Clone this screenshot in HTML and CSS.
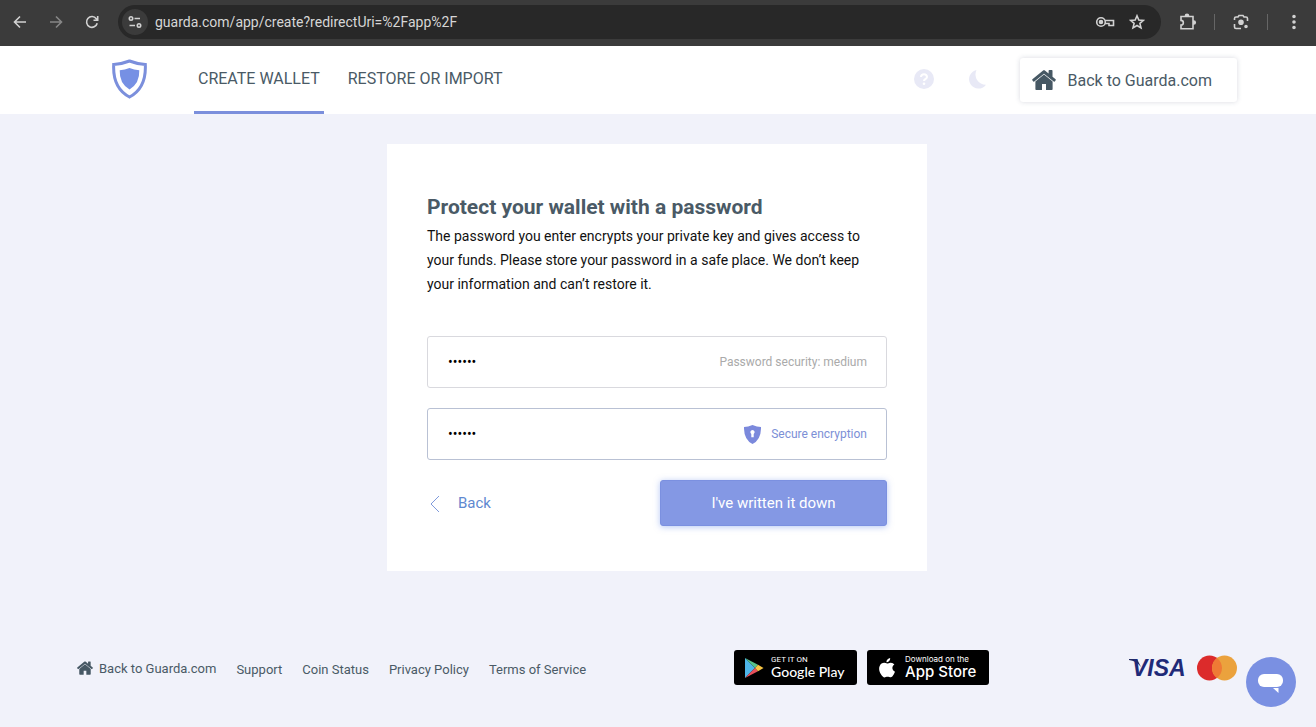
FILE: index.html
```
<!DOCTYPE html>
<html lang="en">
<head>
    <meta charset="UTF-8">
    <meta name="viewport" content="width=device-width, initial-scale=1.0">
    <title>Guarda Wallet</title>
    <link rel="stylesheet" href="styles.css">
</head>
<body>
    <svg width="0" height="0" class="sprite" aria-hidden="true">
        <symbol id="home" viewBox="0 0 24 20">
            <path d="M12 4.400 3.400 11.500V19c0 .6.4 1 1 1H10v-6h4v6h5.600c.6 0 1-.4 1-1v-7.500z"/>
            <path d="M23.600 9.300 20.500 6.700V.8c0-.4-.3-.7-.7-.7h-2.500c-.4 0-.7.3-.7.7v2.700L13.200.700c-.7-.6-1.700-.6-2.400 0L.4 9.300c-.3.300-.3.700-.1 1l1 1.200c.2.300.7.300 1 .1L12 3.700l9.700 7.900c.3.200.8.200 1-.1l1-1.200c.2-.3.200-.7-.1-1z"/>
        </symbol>
    </svg>

    <div class="browser-bar">
        <button class="bar-btn" aria-label="Back">
            <svg width="16" height="16" viewBox="0 0 16 16"><path d="M14 8H3M8 2.500 2.500 8 8 13.500"/></svg>
        </button>
        <button class="bar-btn dim" aria-label="Forward">
            <svg width="16" height="16" viewBox="0 0 16 16"><path d="M2 8h11M8 2.500 13.500 8 8 13.500"/></svg>
        </button>
        <button class="bar-btn" aria-label="Reload">
            <svg width="16" height="16" viewBox="0 0 16 16"><path d="M13.200 9.200A5.400 5.400 0 1 1 12.300 4.700L13.500 6M13.700 2v4.200H9.500"/></svg>
        </button>
        <div class="address">
            <button class="site-info" aria-label="Site information">
                <svg width="14" height="14" viewBox="0 0 14 14"><circle cx="3" cy="3.500" r="1.700"/><path d="M6.500 3.500H12M1.500 10.500H7"/><circle cx="11" cy="10.500" r="1.700"/></svg>
            </button>
            <input class="url" type="text" aria-label="Address" value="guarda.com/app/create?redirectUri=%2Fapp%2F">
            <button class="bar-btn" aria-label="Passwords">
                <svg width="20" height="16" viewBox="0 0 20 16"><circle cx="6" cy="8" r="4.300"/><circle cx="6" cy="8" r="1.500" class="solid"/><path d="M10 6.500h8.500v5H14v-2h-4"/></svg>
            </button>
            <button class="bar-btn" aria-label="Bookmark">
                <svg width="16" height="16" viewBox="0 0 16 16"><path d="m8 1.800 1.800 4.200 4.600.4-3.500 3 1.100 4.500L8 11.500l-4 2.400 1.100-4.500-3.500-3 4.600-.4z"/></svg>
            </button>
        </div>
        <div class="bar-tools">
            <button class="bar-btn" aria-label="Extensions">
                <svg width="18" height="18" viewBox="0 0 18 18"><path d="M2 3.500h12v12.200H2v-3.600a2.300 2.300 0 0 0 0-4.700z"/><path class="solid" d="M6.500 2.800a1.500 1.500 0 0 1 3 0zM14.800 8a1.500 1.500 0 0 1 0 3z"/></svg>
            </button>
            <span class="divider"></span>
            <button class="bar-btn" aria-label="Search with Lens">
                <svg width="18" height="18" viewBox="0 0 18 18"><path d="M2.500 7V5.500q0-1.500 1.500-1.500h2L7 2.500h4L12 4h2q1.500 0 1.500 1.500V8M2.500 11v3q0 1.500 1.500 1.500h5"/><circle class="solid" cx="9" cy="9.300" r="2"/><circle class="solid" cx="14" cy="13.500" r="1"/></svg>
            </button>
            <span class="divider"></span>
            <button class="bar-btn" aria-label="Menu">
                <svg width="18" height="18" viewBox="0 0 18 18"><circle class="solid" cx="9" cy="3.500" r="1"/><circle class="solid" cx="9" cy="9" r="1"/><circle class="solid" cx="9" cy="14.500" r="1"/></svg>
            </button>
        </div>
    </div>

    <header class="header">
        <div class="container header-inner">
            <a href="#" class="logo" aria-label="Guarda">
                <svg width="35" height="40" viewBox="0 0 35 40">
                    <path d="M17.500 2Q25 5 33.300 5.400 34.500 29 17.500 38 .5 29 1.700 5.400 10 5 17.500 2z" fill="none" stroke="#7b8fdc" stroke-width="3"/>
                    <path d="M17.500 9Q22 11 27.300 11.300 27.800 24.500 17.500 30.500 7.200 24.500 7.700 11.300 13 11 17.500 9z" fill="#7690e4"/>
                </svg>
            </a>
            <nav class="nav">
                <a href="#" class="active">CREATE WALLET</a>
                <a href="#">RESTORE OR IMPORT</a>
            </nav>
            <div class="header-actions">
                <div class="header-icons">
                    <button aria-label="Help">
                        <svg width="20" height="20" viewBox="0 0 20 20"><circle cx="10" cy="10" r="10" fill="#e8e9f6"/><path d="M7 8q.2-2.700 3-2.700T13 8q0 1.200-1.500 2T10 12" fill="none" stroke="#fff" stroke-width="2"/><circle cx="10" cy="14.700" r="1.300" fill="#fff"/></svg>
                    </button>
                    <button aria-label="Dark mode">
                        <svg width="20" height="20" viewBox="0 0 20 20"><path d="M8.500 1A9.400 9.400 0 1 0 18 15.800 10.300 10.300 0 0 1 8.500 1z" fill="#e8e9f6"/></svg>
                    </button>
                </div>
                <a href="#" class="home-btn"><svg width="24" height="20"><use href="#home"/></svg>Back to Guarda.com</a>
            </div>
        </div>
    </header>

    <main class="main">
        <form class="card">
            <h1>Protect your wallet with a password</h1>
            <p>The password you enter encrypts your private key and gives access to your funds. Please store your password in a safe place. We don’t keep your information and can’t restore it.</p>
            <div class="field">
                <input type="password" value="secret" id="password" aria-label="Password" autocomplete="off">
                <label for="password">Password security: medium</label>
            </div>
            <div class="field focused">
                <input type="password" value="secret" id="confirm" aria-label="Confirm password" autocomplete="off">
                <label for="confirm" class="secure">
                    <svg width="17" height="19" viewBox="0 0 17 19"><path d="M8.500 0Q13 2 17 2.100 17.300 14.500 8.500 19-.3 14.500 0 2.100 4 2 8.500 0z" fill="#7b89dc"/><path d="M8.500 5a2.200 2.200 0 0 0-1.200 4v3.200h2.400V9a2.200 2.200 0 0 0-1.200-4z" fill="#fff"/></svg>
                    Secure encryption
                </label>
            </div>
            <div class="actions">
                <a href="#" class="back"><svg width="12" height="18" viewBox="0 0 12 18"><path d="M10 2 2 10l8 8" fill="none" stroke="#7f9adb"/></svg>Back</a>
                <button type="button" class="submit">I've written it down</button>
            </div>
        </form>
    </main>

    <footer class="footer">
        <div class="container footer-inner">
            <nav class="footer-links">
                <a href="#" class="footer-home"><svg width="16" height="14"><use href="#home"/></svg>Back to Guarda.com</a>
                <a href="#">Support</a>
                <a href="#">Coin Status</a>
                <a href="#">Privacy Policy</a>
                <a href="#">Terms of Service</a>
            </nav>
            <div class="stores">
                <a href="#" class="store google">
                    <svg width="20" height="22" viewBox="0 0 20 22"><path d="M1 1v20l10-10z" fill="#4db5e8"/><path d="M1 1l10 10 3-3.300z" fill="#55c28a"/><path d="M1 21l10-10 3 3.300z" fill="#e8505b"/><path d="M14 7.700 11 11l3 3.300L19.500 11z" fill="#f6c544"/></svg>
                    <span><small>GET IT ON</small><b>Google Play</b></span>
                </a>
                <a href="#" class="store apple">
                    <svg width="18" height="22" viewBox="0 0 18 22"><path d="M12.200 1c.2 2.300-1.700 4.300-3.700 4.300C8.200 3.200 10.200 1.200 12.200 1zM9.200 6.500c.9 0 2-.9 3.700-.8 1.500.1 2.700.8 3.500 1.900-3 1.900-2.500 5.900.6 7.200-.7 1.800-1.500 3.300-2.700 4.800-1.500 1.500-2.700.2-4.700.2s-3.200 1.300-4.600 0C1.500 16.200.4 12 1.600 9.200c1.500-3.400 4.300-4 7.600-2.700z" fill="#fff"/></svg>
                    <span><small>Download on the</small><b>App Store</b></span>
                </a>
            </div>
            <div class="payments">
                <svg width="60" height="28" viewBox="0 0 60 28" role="img" aria-label="Visa">
                    <path d="M0 5h8l4 8Q7 6.500 0 6z" fill="#20285f"/>
                    <text x="3" y="22" class="visa">VISA</text>
                </svg>
                <svg width="40" height="26" viewBox="0 0 40 26" role="img" aria-label="Mastercard">
                    <circle cx="12.500" cy="13" r="12.500" fill="#dc2b2b"/><circle cx="27.500" cy="13" r="12.500" fill="#eba23d"/>
                    <path d="M20 3a12.500 12.500 0 0 1 0 20 12.500 12.500 0 0 1 0-20z" fill="#ef7a35"/>
                </svg>
            </div>
        </div>
    </footer>

    <button class="chat" aria-label="Open chat">
        <svg width="26" height="22" viewBox="0 0 26 22"><rect y="3" width="25" height="13" rx="6" fill="#fff"/><path d="M15 17h5.500v5z" fill="#fff"/></svg>
    </button>
</body>
</html>
```
FILE: styles.css
```
* {
    box-sizing: border-box;
}

body {
    margin: 0;
    min-height: 100vh;
    font-family: Roboto, "Liberation Sans", sans-serif;
    font-size: 14px;
    color: #111;
    background-color: #f1f2fa;
    display: flex;
    flex-direction: column;
}

a {
    color: inherit;
    text-decoration: none;
}

button {
    padding: 0;
    border: none;
    background: none;
    font-family: inherit;
    cursor: pointer;
}

svg {
    display: block;
    flex: none;
}

.sprite {
    position: absolute;
}

.container {
    width: 100%;
    max-width: 1160px;
    margin: 0 auto;
    display: flex;
}

/* Browser bar */
.browser-bar {
    height: 46px;
    padding: 0 13px 2px 12px;
    display: flex;
    align-items: center;
    gap: 20px;
    background-color: #3b3b3b;
}

.bar-btn svg,
.site-info svg {
    fill: none;
    stroke: #d2d2d2;
    stroke-width: 1.6;
}

.bar-btn svg .solid {
    fill: #d2d2d2;
}

.dim {
    opacity: 0.5;
}

.address {
    flex: 1;
    height: 34px;
    margin: 0 -2px;
    padding: 0 16px 0 4px;
    border-radius: 17px;
    background-color: #282828;
    display: flex;
    align-items: center;
    gap: 14px;
}

.site-info {
    width: 26px;
    height: 26px;
    border-radius: 50%;
    background-color: #3b3b3b;
    display: flex;
    justify-content: center;
    align-items: center;
}

.url {
    flex: 1;
    min-width: 0;
    margin-left: -7px;
    padding: 0;
    border: none;
    outline: none;
    background: none;
    color: #d6d6d6;
    font-family: inherit;
    font-size: 14px;
}

.bar-tools {
    display: flex;
    align-items: center;
    gap: 17px;
}

.divider {
    width: 1px;
    height: 16px;
    background-color: #666;
}

/* Header */
.header {
    background-color: #fff;
}

.header-inner {
    height: 68px;
    padding: 0 1px 0 34px;
    align-items: center;
}

.logo {
    padding-bottom: 2px;
}

.nav {
    height: 100%;
    margin-left: 47px;
    display: flex;
    gap: 20px;
}

.nav a {
    padding: 0 4px;
    font-size: 16px;
    line-height: 65px;
    color: #4a5a66;
    border-bottom: 3px solid transparent;
}

.nav a.active {
    border-color: #7b8fdc;
}

.header-actions,
.header-icons {
    display: flex;
    align-items: center;
    gap: 32px;
}

.header-actions {
    margin-left: auto;
}

.header-icons {
    gap: 34px;
    padding-bottom: 2px;
}

.home-btn {
    height: 44px;
    padding: 0 25px 0 12px;
    border-radius: 3px;
    box-shadow: 0 0 5px rgba(60, 70, 100, 0.2);
    display: flex;
    align-items: center;
    gap: 12px;
    font-size: 16px;
    color: #4a5a66;
}

.home-btn svg,
.footer-home svg {
    fill: #465864;
}

/* Password card */
.main {
    padding: 30px 22px 30px 20px;
}

.card {
    max-width: 540px;
    margin: 0 auto;
    padding: 46px 40px 45px;
    background-color: #fff;
}

.card h1 {
    margin: 0;
    font-size: 21px;
    line-height: 34px;
    color: #4a5a66;
}

.card p {
    margin: 0 0 40px;
    line-height: 24px;
}

.field {
    height: 52px;
    margin-bottom: 20px;
    padding: 0 19px 0 20px;
    border: 1px solid #d9d9de;
    border-radius: 3px;
    display: flex;
    align-items: center;
}

.field.focused {
    border-color: #b9c1d4;
}

.field input {
    flex: 1;
    min-width: 0;
    padding: 0;
    border: none;
    outline: none;
    background: none;
    font-family: inherit;
    font-size: 14px;
}

.field label {
    font-size: 12px;
    color: #aaa;
}

.field .secure {
    display: flex;
    align-items: center;
    gap: 10px;
    color: #7c8fd6;
}

.actions {
    display: flex;
    justify-content: space-between;
    align-items: center;
}

.back {
    padding-left: 2px;
    display: flex;
    align-items: center;
    gap: 17px;
    font-size: 15px;
    color: #6088d0;
}

.submit {
    width: 227px;
    height: 46px;
    border: 1px solid #7b90e0;
    border-radius: 3px;
    background-color: #8498e4;
    box-shadow: 0 1px 6px rgba(110, 145, 235, 0.5);
    font-size: 15px;
    color: #fff;
}

/* Footer */
.footer {
    margin-top: auto;
    padding: 0 22px 42px 20px;
}

.footer-inner {
    align-items: center;
    justify-content: space-between;
}

.footer-links {
    padding-top: 4px;
    display: flex;
    align-items: center;
    gap: 20px;
    font-size: 13px;
    color: #4a5a66;
}

.footer-home {
    padding-bottom: 2px;
    display: flex;
    gap: 6px;
}

.stores {
    margin-left: 8px;
    display: flex;
    gap: 10px;
}

.store {
    width: 123px;
    height: 35px;
    padding-left: 10px;
    border-radius: 3px;
    background-color: #000;
    display: flex;
    align-items: center;
    gap: 7px;
    color: #fff;
    white-space: nowrap;
}

.apple {
    width: 122px;
    padding-left: 11px;
    gap: 9px;
}

.store small,
.store b {
    display: block;
}

.store small {
    font-size: 8px;
    line-height: 9px;
}

.store b {
    font-size: 15px;
    font-weight: 500;
    line-height: 16px;
}

.google b {
    font-family: Lato, sans-serif;
    font-size: 14px;
}

.apple b,
.apple small {
    font-family: Inter, sans-serif;
}

.payments {
    display: flex;
    align-items: center;
    gap: 8px;
}

.visa {
    font-family: "Liberation Sans", sans-serif;
    font-size: 23px;
    font-weight: 700;
    font-style: italic;
    fill: #1f2a78;
}

.chat {
    position: fixed;
    right: 20px;
    bottom: 20px;
    width: 50px;
    height: 50px;
    border-radius: 50%;
    background-color: #7a90e2;
    display: flex;
    justify-content: center;
    align-items: center;
}
```
